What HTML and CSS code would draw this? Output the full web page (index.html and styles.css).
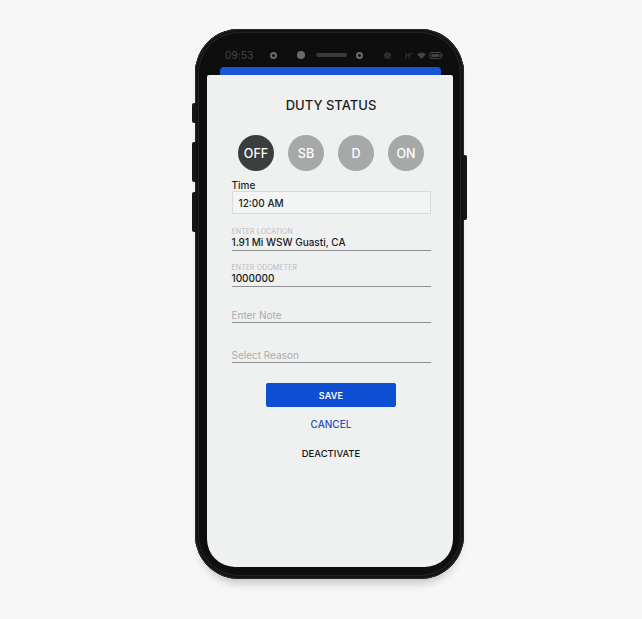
FILE: index.html
```html
<!DOCTYPE html>
<html>
<head>
<meta charset="utf-8">
<link rel="stylesheet" href="styles.css">
</head>
<body>
<div class="stage">
  <div class="phone">
    <span class="hw hw-l1"></span>
    <span class="hw hw-l2"></span>
    <span class="hw hw-l3"></span>
    <span class="hw hw-r1"></span>
    <div class="status">
      <span class="clock">09:53</span>
      <span class="ring r1"></span>
      <span class="dot d1"></span>
      <span class="speaker"></span>
      <span class="ring r2"></span>
      <span class="dot d2"></span>
      <span class="sicons">
        <svg width="38" height="9" viewBox="0 0 38 9">
          <text x="0" y="7.5" font-family="Inter, sans-serif" font-size="7" fill="#444">H</text>
          <text x="5" y="4" font-family="Inter, sans-serif" font-size="5" fill="#444">+</text>
          <path d="M12 3.2 Q16.5 0 21 3.2 L16.5 8 Z" fill="#444"/>
          <rect x="25" y="1.5" width="11" height="6" rx="1" fill="none" stroke="#444" stroke-width="1"/>
          <rect x="36.2" y="3.2" width="1.3" height="2.6" fill="#444"/>
          <rect x="26.5" y="3" width="8" height="3" fill="#444"/>
        </svg>
      </span>
    </div>
    <div class="sheet-edge"></div>
    <div class="card">
      <h1 class="title">DUTY STATUS</h1>
      <div class="states">
        <span class="state active">OFF</span>
        <span class="state">SB</span>
        <span class="state">D</span>
        <span class="state">ON</span>
      </div>
      <div class="form">
        <div class="lbl">Time</div>
        <div class="box">12:00 AM</div>
        <div class="field f-loc">
          <div class="mini">ENTER LOCATION</div>
          <div class="val">1.91 Mi WSW Guasti, CA</div>
        </div>
        <div class="field f-odo">
          <div class="mini">ENTER ODOMETER</div>
          <div class="val">1000000</div>
        </div>
        <div class="field f-note">
          <div class="ph">Enter Note</div>
        </div>
        <div class="field f-reason">
          <div class="ph">Select Reason</div>
        </div>
      </div>
      <div class="actions">
        <button class="save">SAVE</button>
        <div class="cancel">CANCEL</div>
        <div class="deact">DEACTIVATE</div>
      </div>
    </div>
  </div>
</div>
</body>
</html>
```
FILE: styles.css
```css
* { box-sizing: border-box; }
html, body { margin: 0; padding: 0; }
body {
  background: #f7f7f7;
  font-family: Inter, "Noto Sans", sans-serif;
  width: 642px;
  height: 619px;
  overflow: hidden;
}
.stage {
  padding-top: 29px;
  padding-left: 195px;
}
.phone {
  position: relative;
  width: 269px;
  height: 550px;
  background: #0e0e0f;
  border-radius: 44px;
  padding: 18px 11px 12px 12px;
  box-shadow: inset 0 0 0 1px #2a2a2c, inset 0 0 0 3px #121213, inset 0 0 0 4px #242426, 0 9px 10px -5px rgba(0,0,0,0.22);
}
.hw {
  position: absolute;
  background: #161617;
  width: 4px;
}
.hw-l1 { left: -3px; top: 74px; height: 20px; border-radius: 2px 0 0 2px; }
.hw-l2 { left: -3px; top: 113px; height: 40px; border-radius: 2px 0 0 2px; }
.hw-l3 { left: -3px; top: 163px; height: 40px; border-radius: 2px 0 0 2px; }
.hw-r1 { right: -3px; top: 126px; height: 65px; border-radius: 0 2px 2px 0; }

.status {
  height: 16px;
  display: flex;
  align-items: center;
  padding-left: 18px;
}
.clock {
  width: 27px;
  font-size: 10px;
  color: #47474a;
  letter-spacing: 0.2px;
}
.ring {
  width: 7px; height: 7px;
  border-radius: 50%;
  border: 2px solid #6a6a6c;
  background: #111;
}
.r1 { margin-left: 18px; }
.r2 { margin-left: 9px; }
.dot { width: 7px; height: 7px; border-radius: 50%; background: #5c5c5e; }
.d1 { margin-left: 20px; width: 8px; height: 8px; background: #6a6a6c; }
.d2 { margin-left: 21px; background: #2c2c2e; }
.speaker {
  margin-left: 11px;
  width: 31px;
  height: 4px;
  border-radius: 2px;
  background: #3a3a3c;
}
.sicons { margin-left: 14px; display: flex; }

.sheet-edge {
  margin: 4px 12px 0 13px;
  height: 8px;
  background: #1a55d6;
  border-radius: 4px 4px 0 0;
}
.card {
  height: 492px;
  background: #eff1f1;
  border-radius: 2px 2px 28px 28px;
  padding-top: 22px;
  display: flex;
  flex-direction: column;
  align-items: center;
}
.title {
  margin: 0;
  font-size: 13px;
  line-height: 16px;
  font-weight: 500;
  color: #1c1c1c;
  padding-left: 2px;
}
.states {
  margin-top: 22px;
  display: flex;
  gap: 14px;
  padding-left: 2px;
}
.state {
  width: 36px;
  height: 36px;
  border-radius: 50%;
  background: #a7a9a9;
  color: #fff;
  font-size: 12.5px;
  font-weight: 500;
  display: flex;
  align-items: center;
  justify-content: center;
}
.state.active { background: #3a3e3e; }

.form {
  margin-top: 8px;
  width: 199px;
  margin-left: 2px;
}
.lbl {
  font-size: 10px;
  line-height: 12px;
  color: #1e1e1e;
  font-weight: 500;
}
.box {
  height: 23px;
  border: 1px solid #d8dada;
  background: #f3f4f4;
  font-size: 10px;
  font-weight: 500;
  color: #222;
  padding-left: 6px;
  display: flex;
  align-items: center;
}
.field {
  border-bottom: 1px solid #8e9090;
  padding-bottom: 2px;
}
.f-loc { margin-top: 14px; }
.f-odo { margin-top: 13px; }
.f-note { margin-top: 22px; padding-bottom: 1px; }
.f-reason { margin-top: 26px; padding-bottom: 1px; }
.mini {
  font-size: 7px;
  line-height: 8px;
  color: #b9bbbb;
  letter-spacing: 0.1px;
}
.val {
  font-size: 10px;
  line-height: 12px;
  font-weight: 500;
  color: #1a1a1a;
}
.ph {
  font-size: 10px;
  line-height: 12px;
  color: #a9abab;
}
.actions {
  display: flex;
  flex-direction: column;
  align-items: center;
  padding-left: 2px;
}
.save {
  margin-top: 20px;
  width: 130px;
  height: 24px;
  border: none;
  border-radius: 2px;
  background: #0c4fd2;
  color: #fff;
  font-family: Inter, sans-serif;
  font-size: 9px;
  font-weight: 600;
  letter-spacing: 0.2px;
}
.cancel {
  margin-top: 11px;
  font-size: 10px;
  line-height: 12px;
  font-weight: 500;
  color: #1f51b8;
}
.deact {
  margin-top: 18px;
  font-size: 9.5px;
  line-height: 12px;
  font-weight: 500;
  color: #141414;
}
```
